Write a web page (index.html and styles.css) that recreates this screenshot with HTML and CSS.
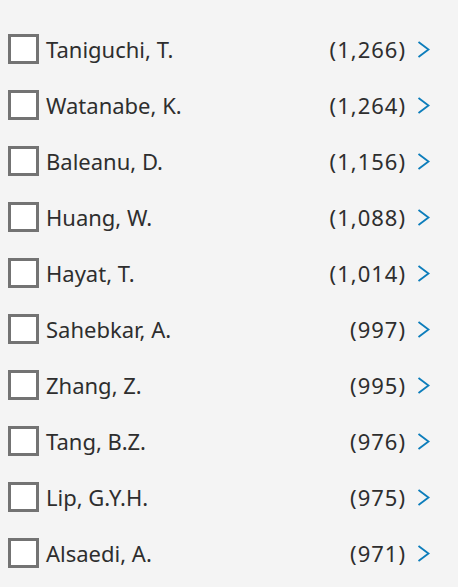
FILE: index.html
```html
<!DOCTYPE html>
<html lang="en">

<head>
    <meta charset="UTF-8">
    <meta name="viewport" content="width=device-width, initial-scale=1.0">
    <title>Authors</title>
    <link rel="stylesheet" href="styles.css">
</head>

<body>
    <ul class="facet-list">
        <li class="facet-row">
            <label class="facet-label"><span class="box"></span>Taniguchi, T.</label>
            <span class="count">(1,266)</span>
            <svg class="chevron" viewBox="0 0 13 17"><polyline points="1.5,1 11.5,8.5 1.5,16" /></svg>
        </li>
        <li class="facet-row">
            <label class="facet-label"><span class="box"></span>Watanabe, K.</label>
            <span class="count">(1,264)</span>
            <svg class="chevron" viewBox="0 0 13 17"><polyline points="1.5,1 11.5,8.5 1.5,16" /></svg>
        </li>
        <li class="facet-row">
            <label class="facet-label"><span class="box"></span>Baleanu, D.</label>
            <span class="count">(1,156)</span>
            <svg class="chevron" viewBox="0 0 13 17"><polyline points="1.5,1 11.5,8.5 1.5,16" /></svg>
        </li>
        <li class="facet-row">
            <label class="facet-label"><span class="box"></span>Huang, W.</label>
            <span class="count">(1,088)</span>
            <svg class="chevron" viewBox="0 0 13 17"><polyline points="1.5,1 11.5,8.5 1.5,16" /></svg>
        </li>
        <li class="facet-row">
            <label class="facet-label"><span class="box"></span>Hayat, T.</label>
            <span class="count">(1,014)</span>
            <svg class="chevron" viewBox="0 0 13 17"><polyline points="1.5,1 11.5,8.5 1.5,16" /></svg>
        </li>
        <li class="facet-row">
            <label class="facet-label"><span class="box"></span>Sahebkar, A.</label>
            <span class="count">(997)</span>
            <svg class="chevron" viewBox="0 0 13 17"><polyline points="1.5,1 11.5,8.5 1.5,16" /></svg>
        </li>
        <li class="facet-row">
            <label class="facet-label"><span class="box"></span>Zhang, Z.</label>
            <span class="count">(995)</span>
            <svg class="chevron" viewBox="0 0 13 17"><polyline points="1.5,1 11.5,8.5 1.5,16" /></svg>
        </li>
        <li class="facet-row">
            <label class="facet-label"><span class="box"></span>Tang, B.Z.</label>
            <span class="count">(976)</span>
            <svg class="chevron" viewBox="0 0 13 17"><polyline points="1.5,1 11.5,8.5 1.5,16" /></svg>
        </li>
        <li class="facet-row">
            <label class="facet-label"><span class="box"></span>Lip, G.Y.H.</label>
            <span class="count">(975)</span>
            <svg class="chevron" viewBox="0 0 13 17"><polyline points="1.5,1 11.5,8.5 1.5,16" /></svg>
        </li>
        <li class="facet-row">
            <label class="facet-label"><span class="box"></span>Alsaedi, A.</label>
            <span class="count">(971)</span>
            <svg class="chevron" viewBox="0 0 13 17"><polyline points="1.5,1 11.5,8.5 1.5,16" /></svg>
        </li>
    </ul>
</body>

</html>
```

FILE: styles.css
```css
* {
    margin: 0;
    padding: 0;
    box-sizing: border-box;
}

body {
    background: #f4f4f4;
    font-family: 'Noto Sans', 'Open Sans', sans-serif;
    color: #2e2e2e;
}

.facet-list {
    list-style: none;
    padding: 21px 0 0 8px;
    width: 430px;
}

.facet-row {
    display: flex;
    align-items: center;
    height: 56px;
}

.facet-label {
    flex: 1;
    display: flex;
    align-items: center;
    gap: 7px;
    font-size: 22px;
}

.box {
    width: 31px;
    height: 30px;
    background: #fff;
    border: 3px solid #737373;
}

.count {
    font-size: 22px;
    letter-spacing: 1px;
}

.chevron {
    width: 13px;
    height: 17px;
    margin-left: 11px;
    fill: none;
    stroke: #0c7dbb;
    stroke-width: 1.8;
}
```
